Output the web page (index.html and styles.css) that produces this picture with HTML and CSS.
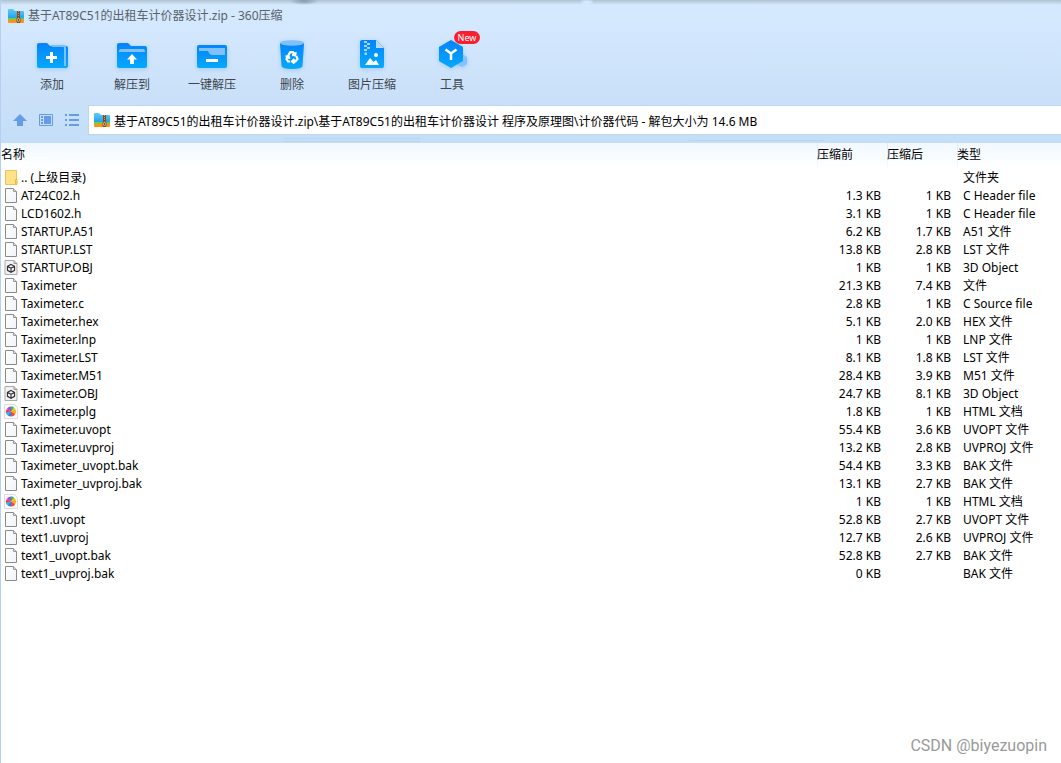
FILE: index.html
```html
<!DOCTYPE html>
<html lang="zh-CN">
<head>
<meta charset="utf-8">
<title>360压缩</title>
<link rel="stylesheet" href="styles.css">
</head>
<body>
<svg class="defs" aria-hidden="true">
  <defs>
    <linearGradient id="blue" x1="0" y1="0" x2="0" y2="1"><stop offset="0" stop-color="#0583fb"/><stop offset="1" stop-color="#05a9fd"/></linearGradient>
    <linearGradient id="sky" x1="0" y1="0" x2="0" y2="1"><stop offset="0" stop-color="#5ccbfb"/><stop offset="1" stop-color="#1e9cec"/></linearGradient>
    <linearGradient id="paper" x1="0" y1="0" x2="1" y2="1"><stop offset="0" stop-color="#fff"/><stop offset="1" stop-color="#f1f3f4"/></linearGradient>
    <symbol id="zip" viewBox="0 0 16 14">
      <path d="M0 1Q0 0 1 0H5L7 2H15Q16 2 16 3V10H0Z" fill="url(#sky)"/>
      <path d="M0 9H16V12H0Z" fill="#7ac943"/>
      <path d="M0 11H16V13Q16 14 15 14H1Q0 14 0 13Z" fill="#f7931e"/>
      <path d="M9 2H12V14H9Z" fill="#8a4b16"/>
      <path d="M10.500 2V9" stroke="#d99a4a" stroke-dasharray="1 1"/>
      <path d="M9 9H12V13H9Z" fill="#fff" stroke="#8a4b16"/>
      <path d="M10 10H11V12H10Z" fill="#8a4b16"/>
    </symbol>
    <symbol id="file" viewBox="0 0 14 18">
      <path d="M1.500 1.500H9.500L12.500 4.500V15.500H1.500Z" fill="url(#paper)" stroke="#8a8a8a"/>
      <path d="M9.500 1.500V4.500H12.500" fill="#ddd" stroke="#999"/>
    </symbol>
    <symbol id="obj" viewBox="0 0 14 18">
      <path d="M1 1.500H10L13 4.500V15.500H1Z" fill="#f2f2f2" stroke="#aaa"/>
      <path d="M10 1.500V4.500H13" fill="#ccc" stroke="#999"/>
      <path d="M7 5.500L10.500 7.300V11.300L7 13.200L3.500 11.300V7.300ZM3.500 7.300L7 9.300L10.500 7.300M7 9.300V13" fill="#fff" stroke="#333" stroke-width="1.200"/>
    </symbol>
    <symbol id="html" viewBox="0 0 14 18">
      <path d="M.5 1.500H10.500L13.500 4.500V15.500H.5Z" fill="#fafafa" stroke="#ddd"/>
      <path d="M7 8.500V3.500Q10 3.500 11.300 6Z" fill="#b4d51c"/>
      <path d="M7 8.500L11.300 6Q13 8.500 11.300 11Z" fill="#ffae1a"/>
      <path d="M7 8.500L11.300 11Q10 13.500 7 13.500Z" fill="#fb4633"/>
      <path d="M7 8.500V13.500Q4 13.500 2.700 11Z" fill="#2d7df5"/>
      <path d="M7 8.500L2.700 11Q1 8.500 2.700 6Z" fill="#fb3a48"/>
      <path d="M7 8.500L2.700 6Q4 3.500 7 3.500Z" fill="#b13ff0"/>
      <path d="M7 8.500L4 12.500Q2.500 11.500 2.300 9.500Z" fill="#17c4f2"/>
      <path d="M7 8.500L7 3.500Q8.500 3.300 9.800 4.200Z" fill="#27c25b"/>
    </symbol>
    <symbol id="folder" viewBox="0 0 14 18">
      <path d="M1.500 1.500H12.500V15.500H1.500Z" fill="#fee28a" stroke="#eac550"/>
      <path d="M11.500 15.500V10.500H13V15.500Z" fill="#fbd566" stroke="#e5bc45"/>
    </symbol>
  </defs>
</svg>

<div class="window">
  <header class="chrome">
    <div class="titlebar">
      <svg class="zip"><use href="#zip"/></svg>
      <h1>基于AT89C51的出租车计价器设计.zip - 360压缩</h1>
    </div>

    <nav class="toolbar">
      <button type="button" class="tool">
        <svg viewBox="0 0 36 32"><path d="M3 5Q3 3 5 3H13L16 6H32Q34 6 34 8V26Q34 28 32 28H5Q3 28 3 26Z" fill="url(#blue)"/><path d="M17 5H30Q32 5 32 7V26H30V8Q30 7 29 7H18Z" fill="#7fc0fd"/><path d="M12 17.500H23M17.500 12V23" stroke="#fff" stroke-width="3"/></svg>
        添加
      </button>
      <button type="button" class="tool">
        <svg viewBox="0 0 36 32"><path d="M3 5Q3 3 5 3H14L17 6H31Q33 6 33 8V26Q33 28 31 28H5Q3 28 3 26Z" fill="url(#blue)"/><path d="M5 11Q5 9 7 9H29Q31 9 31 11V12H5Z" fill="#7fc0fd"/><path d="M18 14L23 19.500H20V24H16V19.500H13Z" fill="#fff"/></svg>
        解压到
      </button>
      <button type="button" class="tool">
        <svg viewBox="0 0 36 32"><rect x="3" y="5" width="30" height="23" rx="2" fill="url(#blue)"/><path d="M5 8H31V15H18Q16 15 15 13L14 11H5Z" fill="#7fc0fd"/><path d="M12 20.500H24" stroke="#fff" stroke-width="3"/></svg>
        一键解压
      </button>
      <button type="button" class="tool">
        <svg viewBox="0 0 36 32"><path d="M6 3H30L28.500 26Q28 29 18 29Q8 29 7.500 26Z" fill="url(#blue)"/><ellipse cx="18" cy="3" rx="12" ry="2.700" fill="#7fc0fd"/><g fill="none" stroke="#fff" stroke-width="2.200"><path d="M14.200 15.300L16.300 12.200H19L20.300 14.300M18 15L21.200 15.300L21.800 12.300"/><path d="M22.300 16L23.500 19L21.500 21.500H18.500M20.500 19L18 21.500L20.500 23.500"/><path d="M16 21.500H14L12.500 19L14 16.500M11.500 16.500L14.300 16L15.600 18.700"/></g></svg>
        删除
      </button>
      <button type="button" class="tool">
        <svg viewBox="0 0 36 32"><path d="M6 2Q6 0 8 0H22L30 8V26Q30 28 28 28H8Q6 28 6 26Z" fill="url(#blue)"/><path d="M22 0V8H30Z" fill="#b9dcfd"/><path d="M10 1H13V3H16V5H13V7H16V9H13V11H10V9H13V7H10V5H13V3H10ZM10.500 12.500H13V15H10.500Z" fill="#a5d4fd"/><circle cx="22" cy="15" r="2" fill="#fff"/><path d="M11 25L16 18L19.500 22L22 20L25 25Z" fill="#fff"/></svg>
        图片压缩
      </button>
      <button type="button" class="tool">
        <svg viewBox="0 0 36 32"><path d="M28 14L33 17V24L28 27L22 24V17Z" fill="#85c2fc"/><path d="M17 0L29 7V21L17 28L5 21V7Z" fill="url(#blue)"/><path d="M11.500 9.500L17 13.500L22.500 9.500M17 13.500V20" fill="none" stroke="#fff" stroke-width="2.500"/></svg>
        工具
        <span class="badge">New</span>
      </button>
    </nav>

    <div class="pathbar">
      <button type="button" class="nav" aria-label="上级目录"><svg viewBox="0 0 16 16"><path d="M8 2L15 9H11V14H5V9H1Z" fill="#649cea"/></svg></button>
      <button type="button" class="nav" aria-label="预览"><svg viewBox="0 0 16 16"><path d="M1.500 2.500H14.500V13.500H1.500Z" fill="none" stroke="#649cea"/><path d="M6 4H13V12H6ZM3 4H5V6H3ZM3 7H5V9H3ZM3 10H5V12H3Z" fill="#649cea"/></svg></button>
      <button type="button" class="nav" aria-label="列表"><svg viewBox="0 0 16 16"><path d="M1 3H3M1 8H3M1 13H3M5 3H15M5 8H15M5 13H15" stroke="#649cea" stroke-width="2"/></svg></button>
      <div class="address">
        <svg class="zip"><use href="#zip"/></svg>
        <input type="text" aria-label="路径" value="基于AT89C51的出租车计价器设计.zip\基于AT89C51的出租车计价器设计 程序及原理图\计价器代码 - 解包大小为 14.6 MB">
      </div>
    </div>
  </header>

  <main>
    <table class="files">
      <colgroup><col><col class="size"><col class="size"><col class="type"></colgroup>
      <thead><tr><th>名称</th><th>压缩前</th><th>压缩后</th><th>类型</th></tr></thead>
      <tbody>
        <tr><td><svg><use href="#folder"/></svg>.. (上级目录)</td><td></td><td></td><td>文件夹</td></tr>
        <tr><td><svg><use href="#file"/></svg>AT24C02.h</td><td>1.3 KB</td><td>1 KB</td><td>C Header file</td></tr>
        <tr><td><svg><use href="#file"/></svg>LCD1602.h</td><td>3.1 KB</td><td>1 KB</td><td>C Header file</td></tr>
        <tr><td><svg><use href="#file"/></svg>STARTUP.A51</td><td>6.2 KB</td><td>1.7 KB</td><td>A51 文件</td></tr>
        <tr><td><svg><use href="#file"/></svg>STARTUP.LST</td><td>13.8 KB</td><td>2.8 KB</td><td>LST 文件</td></tr>
        <tr><td><svg><use href="#obj"/></svg>STARTUP.OBJ</td><td>1 KB</td><td>1 KB</td><td>3D Object</td></tr>
        <tr><td><svg><use href="#file"/></svg>Taximeter</td><td>21.3 KB</td><td>7.4 KB</td><td>文件</td></tr>
        <tr><td><svg><use href="#file"/></svg>Taximeter.c</td><td>2.8 KB</td><td>1 KB</td><td>C Source file</td></tr>
        <tr><td><svg><use href="#file"/></svg>Taximeter.hex</td><td>5.1 KB</td><td>2.0 KB</td><td>HEX 文件</td></tr>
        <tr><td><svg><use href="#file"/></svg>Taximeter.lnp</td><td>1 KB</td><td>1 KB</td><td>LNP 文件</td></tr>
        <tr><td><svg><use href="#file"/></svg>Taximeter.LST</td><td>8.1 KB</td><td>1.8 KB</td><td>LST 文件</td></tr>
        <tr><td><svg><use href="#file"/></svg>Taximeter.M51</td><td>28.4 KB</td><td>3.9 KB</td><td>M51 文件</td></tr>
        <tr><td><svg><use href="#obj"/></svg>Taximeter.OBJ</td><td>24.7 KB</td><td>8.1 KB</td><td>3D Object</td></tr>
        <tr><td><svg><use href="#html"/></svg>Taximeter.plg</td><td>1.8 KB</td><td>1 KB</td><td>HTML 文档</td></tr>
        <tr><td><svg><use href="#file"/></svg>Taximeter.uvopt</td><td>55.4 KB</td><td>3.6 KB</td><td>UVOPT 文件</td></tr>
        <tr><td><svg><use href="#file"/></svg>Taximeter.uvproj</td><td>13.2 KB</td><td>2.8 KB</td><td>UVPROJ 文件</td></tr>
        <tr><td><svg><use href="#file"/></svg>Taximeter_uvopt.bak</td><td>54.4 KB</td><td>3.3 KB</td><td>BAK 文件</td></tr>
        <tr><td><svg><use href="#file"/></svg>Taximeter_uvproj.bak</td><td>13.1 KB</td><td>2.7 KB</td><td>BAK 文件</td></tr>
        <tr><td><svg><use href="#html"/></svg>text1.plg</td><td>1 KB</td><td>1 KB</td><td>HTML 文档</td></tr>
        <tr><td><svg><use href="#file"/></svg>text1.uvopt</td><td>52.8 KB</td><td>2.7 KB</td><td>UVOPT 文件</td></tr>
        <tr><td><svg><use href="#file"/></svg>text1.uvproj</td><td>12.7 KB</td><td>2.6 KB</td><td>UVPROJ 文件</td></tr>
        <tr><td><svg><use href="#file"/></svg>text1_uvopt.bak</td><td>52.8 KB</td><td>2.7 KB</td><td>BAK 文件</td></tr>
        <tr><td><svg><use href="#file"/></svg>text1_uvproj.bak</td><td>0 KB</td><td></td><td>BAK 文件</td></tr>
      </tbody>
    </table>
  </main>
  <span class="watermark">CSDN @biyezuopin</span>
</div>
</body>
</html>
```
FILE: styles.css
```css
* { box-sizing: border-box; }
body {
  margin: 0;
  font: 12px/18px "Noto Sans", "Noto Sans CJK SC", sans-serif;
  color: #000;
  background: #fff;
}
button, input { font: inherit; color: inherit; border: 0; padding: 0; background: none; }
.defs { position: absolute; width: 0; height: 0; }
.window { position: relative; min-height: 100vh; border-left: 1px solid #b5d0f3; }
.chrome {
  background:
    radial-gradient(#d5e9fe 30%, transparent) 580px 0 / 12px 5px no-repeat,
    radial-gradient(#8499ab, transparent 70%) 288px -3px / 30px 8px no-repeat,
    linear-gradient(#b0c2d1 0, #d5e9fe 5px, #d3e8fe 30px, #cbe1f9 90px, #c4def8 143px);
}
.titlebar { display: flex; align-items: center; gap: 4px; height: 32px; padding: 0 7px; }
.titlebar h1 { margin: 0; font-size: 12px; font-weight: 400; color: #5a6168; }
.zip { flex: none; width: 16px; height: 14px; }
.toolbar { display: flex; height: 74px; padding: 8px 11px 0; }
.tool {
  position: relative;
  display: flex;
  flex-direction: column;
  align-items: center;
  gap: 4px;
  width: 80px;
  height: 54px;
  color: #3d454d;
}
.tool svg { width: 36px; height: 32px; overflow: visible; filter: drop-shadow(0 1px 2px #9ac8f5); }
.badge {
  position: absolute;
  top: -9px;
  left: 42px;
  width: 26px;
  height: 13px;
  border-radius: 7px;
  background: #fa1f2f;
  color: #fff;
  font-size: 9px;
  line-height: 13px;
}
.pathbar {
  display: flex;
  align-items: center;
  gap: 10px;
  height: 37px;
  padding: 0 0 9px 11px;
  background:
    linear-gradient(#b8d6f2, #b8d6f2) 283px 32px / 136px 1px no-repeat,
    linear-gradient(#b8d6f2, #b8d6f2) 283px 35px / 136px 1px no-repeat,
    linear-gradient(#b8d6f2, #b8d6f2) 688px 34px / 136px 1px no-repeat;
}
.nav { width: 16px; height: 16px; }
.nav svg { display: block; width: 16px; height: 16px; }
.address {
  flex: 1;
  display: flex;
  align-items: center;
  gap: 4px;
  height: 28px;
  margin-left: -1px;
  padding-left: 5px;
  background: #fff;
  box-shadow: 0 0 0 1px #bcd7f4;
}
.address input { flex: 1; min-width: 0; height: 20px; padding-top: 2px; outline: 0; }
.files { width: 100%; table-layout: fixed; border-collapse: collapse; }
.size { width: 70px; }
.type { width: 104px; }
.files thead { background: linear-gradient(#f1f8ff, #fff); }
.files th {
  height: 26px;
  padding: 0 0 3px;
  text-align: left;
  font-weight: 400;
}
.files th + th { background: linear-gradient(#d9eafa, #f8fbff) 0 0 / 1px 100% no-repeat; }
.files td { height: 18px; padding: 0 6px 0 0; white-space: nowrap; }
.files td:nth-child(2), .files td:nth-child(3) { text-align: right; }
.files td:last-child { padding: 0 0 0 6px; }
.files td:first-child { padding-left: 3px; }
.files svg { width: 14px; height: 18px; margin-right: 3px; vertical-align: top; }
.watermark {
  position: absolute;
  right: 14px;
  bottom: 7px;
  font: 16px/20px Roboto, sans-serif;
  color: #999;
}
```
